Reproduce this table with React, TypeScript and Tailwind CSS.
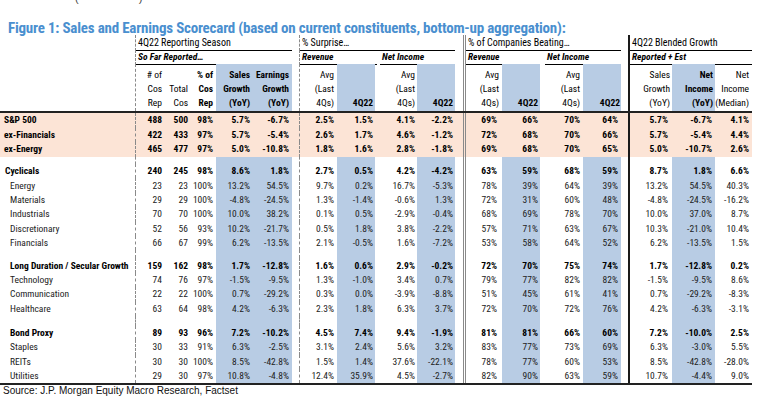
const GRID =
  'grid grid-cols-[135px_29px_26px_26px_38px_38px_7px_38px_38px_42px_38px_8px_39px_38px_43px_38px_7px_44px_43px_37px]'

const SEP_A = 'border-l border-dashed border-[#8a8a8a]'
const SEP_C = 'border-l-[3px] border-double border-[#8a8a8a]'
const SEP_D = 'border-l-2 border-[#1a1a1a]'

const BLUE = 'bg-[#b8cce4]'

// one entry per data column (gap columns are added separately)
const cols = [
  { pr: 'pr-[2px]', blue: false, sep: SEP_A },
  { pr: 'pr-[2px]', blue: false, sep: '' },
  { pr: 'pr-[3px]', blue: false, sep: '' },
  { pr: 'pr-[4px]', blue: true, sep: '' },
  { pr: 'pr-[3px]', blue: true, sep: '' },
  { pr: 'pr-[3px]', blue: false, sep: SEP_A },
  { pr: 'pr-[2px]', blue: true, sep: '' },
  { pr: 'pr-[2px]', blue: false, sep: '' },
  { pr: 'pr-[2px]', blue: true, sep: '' },
  { pr: 'pr-[5px]', blue: false, sep: SEP_C },
  { pr: 'pr-[2px]', blue: true, sep: '' },
  { pr: 'pr-[3px]', blue: false, sep: '' },
  { pr: 'pr-[3px]', blue: true, sep: '' },
  { pr: 'pr-[4px]', blue: false, sep: SEP_D },
  { pr: 'pr-[3px]', blue: true, sep: '' },
  { pr: 'pr-[3px]', blue: false, sep: '' },
]

type Row = { label: string; v: string[]; bold?: boolean; peach?: boolean; indent?: string }

const top: Row[] = [
  { label: 'S&P 500', bold: true, peach: true, indent: 'pl-[4px]', v: ['488', '500', '98%', '5.7%', '-6.7%', '2.5%', '1.5%', '4.1%', '-2.2%', '69%', '66%', '70%', '64%', '5.7%', '-6.7%', '4.1%'] },
  { label: 'ex-Financials', bold: true, peach: true, indent: 'pl-[4px]', v: ['422', '433', '97%', '5.7%', '-5.4%', '2.6%', '1.7%', '4.6%', '-1.2%', '72%', '68%', '70%', '66%', '5.7%', '-5.4%', '4.4%'] },
  { label: 'ex-Energy', bold: true, peach: true, indent: 'pl-[4px]', v: ['465', '477', '97%', '5.0%', '-10.8%', '1.8%', '1.6%', '2.8%', '-1.8%', '69%', '68%', '70%', '65%', '5.0%', '-10.7%', '2.6%'] },
]

const groups: Row[][] = [
  [
    { label: 'Cyclicals', bold: true, indent: 'pl-[5px]', v: ['240', '245', '98%', '8.6%', '1.8%', '2.7%', '0.5%', '4.2%', '-4.2%', '63%', '59%', '68%', '59%', '8.7%', '1.8%', '6.6%'] },
    { label: 'Energy', v: ['23', '23', '100%', '13.2%', '54.5%', '9.7%', '0.2%', '16.7%', '-5.3%', '78%', '39%', '64%', '39%', '13.2%', '54.5%', '40.3%'] },
    { label: 'Materials', v: ['29', '29', '100%', '-4.8%', '-24.5%', '1.3%', '-1.4%', '-0.6%', '1.3%', '72%', '31%', '60%', '48%', '-4.8%', '-24.5%', '-16.2%'] },
    { label: 'Industrials', v: ['70', '70', '100%', '10.0%', '38.2%', '0.1%', '0.5%', '-2.9%', '-0.4%', '68%', '69%', '78%', '70%', '10.0%', '37.0%', '8.7%'] },
    { label: 'Discretionary', v: ['52', '56', '93%', '10.2%', '-21.7%', '0.5%', '1.8%', '3.8%', '-2.2%', '57%', '71%', '63%', '67%', '10.3%', '-21.0%', '10.4%'] },
    { label: 'Financials', v: ['66', '67', '99%', '6.2%', '-13.5%', '2.1%', '-0.5%', '1.6%', '-7.2%', '53%', '58%', '64%', '52%', '6.2%', '-13.5%', '1.5%'] },
  ],
  [
    { label: 'Long Duration / Secular Growth', bold: true, v: ['159', '162', '98%', '1.7%', '-12.8%', '1.6%', '0.6%', '2.9%', '-0.2%', '72%', '70%', '75%', '74%', '1.7%', '-12.8%', '0.2%'] },
    { label: 'Technology', v: ['74', '76', '97%', '-1.5%', '-9.5%', '1.3%', '-1.0%', '3.4%', '0.7%', '79%', '77%', '82%', '82%', '-1.5%', '-9.5%', '8.6%'] },
    { label: 'Communication', v: ['22', '22', '100%', '0.7%', '-29.2%', '0.3%', '0.0%', '-3.9%', '-8.8%', '51%', '45%', '61%', '41%', '0.7%', '-29.2%', '-8.3%'] },
    { label: 'Healthcare', v: ['63', '64', '98%', '4.2%', '-6.3%', '2.3%', '1.8%', '6.3%', '3.7%', '72%', '70%', '72%', '76%', '4.2%', '-6.3%', '-3.1%'] },
  ],
  [
    { label: 'Bond Proxy', bold: true, v: ['89', '93', '96%', '7.2%', '-10.2%', '4.5%', '7.4%', '9.4%', '-1.9%', '81%', '81%', '66%', '60%', '7.2%', '-10.0%', '2.5%'] },
    { label: 'Staples', v: ['30', '33', '91%', '6.3%', '-2.5%', '3.1%', '2.4%', '5.6%', '3.2%', '83%', '77%', '73%', '69%', '6.3%', '-3.0%', '5.5%'] },
    { label: 'REITs', v: ['30', '30', '100%', '8.5%', '-42.8%', '1.5%', '1.4%', '37.6%', '-22.1%', '78%', '77%', '60%', '53%', '8.5%', '-42.8%', '-28.0%'] },
    { label: 'Utilities', v: ['29', '30', '97%', '10.8%', '-4.8%', '12.4%', '35.9%', '4.5%', '-2.7%', '82%', '90%', '63%', '59%', '10.7%', '-4.4%', '9.0%'] },
  ],
]

// headers of the third header row, lines stacked bottom-up
const heads: { lines: string[]; bold?: boolean; pr?: string }[] = [
  { lines: ['# of', 'Cos', 'Rep'] },
  { lines: ['Total', 'Cos'] },
  { lines: ['% of', 'Cos', 'Rep'], bold: true },
  { lines: ['Sales', 'Growth', '(YoY)'], bold: true },
  { lines: ['Earnings', 'Growth', '(YoY)'], bold: true },
  { lines: ['Avg', '(Last', '4Qs)'] },
  { lines: ['4Q22'], bold: true },
  { lines: ['Avg', '(Last', '4Qs)'] },
  { lines: ['4Q22'], bold: true },
  { lines: ['Avg', '(Last', '4Qs)'], pr: 'pr-[3px]' },
  { lines: ['4Q22'], bold: true },
  { lines: ['Avg', '(Last', '4Qs)'] },
  { lines: ['4Q22'], bold: true, pr: 'pr-[1px]' },
  { lines: ['Sales', 'Growth', '(YoY)'], pr: 'pr-[2px]' },
  { lines: ['Net', 'Income', '(YoY)'], bold: true, pr: 'pr-[2px]' },
  { lines: ['Net', 'Income', '(Median)'], pr: 'pr-[3px]' },
]

function Gap({ peach }: { peach?: boolean }) {
  return <div className={peach ? '' : 'bg-white'} />
}

function withGaps(cells: React.ReactNode[], peach?: boolean) {
  const out: React.ReactNode[] = []
  cells.forEach((c, i) => {
    out.push(c)
    if (i === 4 || i === 8 || i === 12) out.push(<Gap key={'g' + i} peach={peach} />)
  })
  return out
}

function DataRow({ row }: { row: Row }) {
  const h = row.peach ? 'h-[14.5px]' : 'h-[14.4px]'
  const weight = row.bold ? 'font-bold text-black' : 'text-[#222]'
  return (
    <div className={`${GRID} ${h} ${weight} ${row.peach ? 'bg-[#fce4d6]' : ''}`}>
      <div className={`flex items-center ${row.indent ?? 'pl-[10px]'} whitespace-nowrap`}>{row.label}</div>
      {withGaps(
        row.v.map((val, i) => (
          <div
            key={i}
            className={`flex items-center justify-end ${cols[i].pr} ${cols[i].sep} ${cols[i].blue && !row.peach ? BLUE : ''}`}
          >
            {val}
          </div>
        )),
        row.peach,
      )}
    </div>
  )
}

function Spacer({ h }: { h: string }) {
  return (
    <div className={`${GRID} ${h}`}>
      <div />
      {withGaps(cols.map((c, i) => <div key={i} className={`${c.sep} ${c.blue ? BLUE : ''}`} />))}
    </div>
  )
}

export default function App() {
  return (
    <div className="w-[772px] h-[402px] overflow-hidden bg-white [font-family:'Liberation_Sans',Arial,sans-serif]">
      <div className="h-[6px] overflow-hidden">
        <div className="-mt-[8px] pl-[75px] text-[11px] leading-[13px] text-[#444]">
          (<span className="inline-block w-[60px]" />)
        </div>
      </div>
      <div className="mt-[14px] h-[15px] pl-[8px] text-[15px] leading-[16px] tracking-[-0.2px] font-bold text-[#4a8fcf] whitespace-nowrap [font-family:'Roboto_Condensed','Liberation_Sans',sans-serif]">
        Figure 1: Sales and Earnings Scorecard (based on current constituents, bottom-up aggregation):
      </div>

      <div className="w-[752px] text-[9.5px] leading-[14px] [font-family:'Roboto_Condensed','Liberation_Sans',sans-serif]">
        {/* header row 1 */}
        <div className={`${GRID} h-[15px] text-[10px]`}>
          <div />
          <div className={`col-span-5 ${SEP_A}`}>
            <div className="h-full border-b border-black pl-[2px] pt-[1px] text-black">4Q22 Reporting Season</div>
          </div>
          <div />
          <div className={`col-span-4 ${SEP_A}`}>
            <div className="h-full border-b border-black pl-[2px] pt-[1px] text-black">% Surprise…</div>
          </div>
          <div />
          <div className={`col-span-4 ${SEP_C}`}>
            <div className="h-full border-b border-black pl-[2px] pt-[1px] text-black">% of Companies Beating…</div>
          </div>
          <div />
          <div className={`col-span-3 ${SEP_D}`}>
            <div className="h-full border-b border-black pl-[2px] pt-[1px] text-black">4Q22 Blended Growth</div>
          </div>
        </div>

        {/* header row 2 */}
        <div className={`${GRID} h-[14px] italic font-bold text-black`}>
          <div />
          <div className={`col-span-5 ${SEP_A}`}>
            <div className="h-full border-b border-black pl-[2px]">So Far Reported…</div>
          </div>
          <div />
          <div className={`col-span-2 ${SEP_A}`}>
            <div className="h-full border-b border-black pl-[2px] -mr-[2px]">Revenue</div>
          </div>
          <div className="col-span-2">
            <div className="h-full border-b border-black ml-[5px] pl-[2px]">Net Income</div>
          </div>
          <div />
          <div className={`col-span-2 ${SEP_C}`}>
            <div className="h-full border-b border-black pl-[2px]">Revenue</div>
          </div>
          <div className="col-span-2">
            <div className="h-full border-b border-black ml-[5px] pl-[2px]">Net Income</div>
          </div>
          <div />
          <div className={`col-span-3 ${SEP_D}`}>
            <div className="h-full border-b border-black pl-[2px]">Reported + Est</div>
          </div>
        </div>

        {/* header row 3 */}
        <div className={`${GRID} h-[47px] text-black`}>
          <div />
          {withGaps(
            heads.map((hd, i) => (
              <div
                key={i}
                className={`flex flex-col justify-end items-end pb-[1px] ${hd.pr ?? cols[i].pr} ${cols[i].sep} ${cols[i].blue ? BLUE : ''} ${hd.bold ? 'font-bold' : ''}`}
              >
                {hd.lines.map((l) => (
                  <div key={l} className="leading-[14px] whitespace-nowrap">
                    {l}
                  </div>
                ))}
              </div>
            )),
          )}
        </div>

        {/* body */}
        <div className="border-t-2 border-b-2 border-[#222]">
          {top.map((r) => (
            <DataRow key={r.label} row={r} />
          ))}
          <Spacer h="h-[7.5px]" />
          {groups[0].map((r) => (
            <DataRow key={r.label} row={r} />
          ))}
          <Spacer h="h-[8px]" />
          {groups[1].map((r) => (
            <DataRow key={r.label} row={r} />
          ))}
          <Spacer h="h-[10px]" />
          {groups[2].map((r) => (
            <DataRow key={r.label} row={r} />
          ))}
        </div>
      </div>

      <div className="pl-[3px] text-[10px] leading-[12px] text-[#111]">
        Source: J.P. Morgan Equity Macro Research, Factset
      </div>
    </div>
  )
}
